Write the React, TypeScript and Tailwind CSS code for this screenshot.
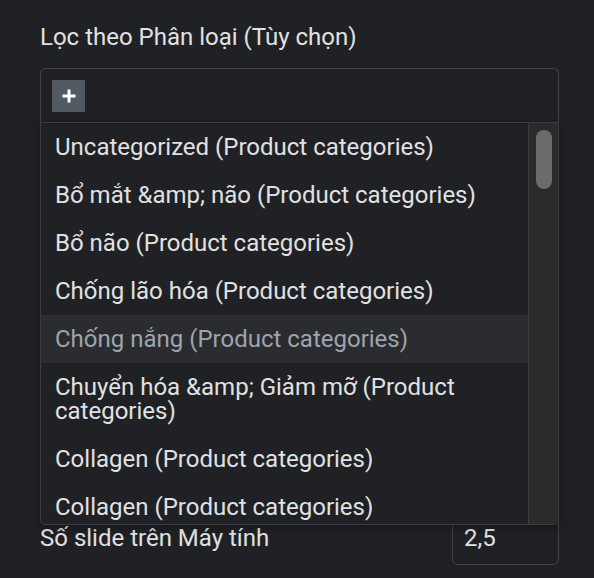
import React from "react";

const items: { label: string; highlight?: boolean }[] = [
  { label: "Uncategorized (Product categories)" },
  { label: "Bổ mắt &amp; não (Product categories)" },
  { label: "Bổ não (Product categories)" },
  { label: "Chống lão hóa (Product categories)" },
  { label: "Chống nắng (Product categories)", highlight: true },
  { label: "Chuyển hóa &amp; Giảm mỡ (Product categories)" },
  { label: "Collagen (Product categories)" },
  { label: "Collagen (Product categories)" },
  { label: "Collagen (Product categories)" },
];

export default function App() {
  return (
    <div
      className="w-[594px] h-[578px] overflow-hidden bg-[#1f2124] pl-[40px] pr-[35px] pt-[22px] text-[#e0e1e3]"
      style={{ fontFamily: "Roboto, 'Noto Sans', sans-serif" }}
    >
      <div className="text-[24px] leading-[30px]">Lọc theo Phân loại (Tùy chọn)</div>
      <div className="relative mt-[16px]">
        <div className="h-[54px] rounded-t-[6px] border border-b-0 border-[#3f444b] pl-[11px] pt-[11px]">
          <div className="flex h-[32px] w-[33px] items-center justify-center bg-[#515962]">
            <svg width="16" height="16" viewBox="0 0 16 16">
              <path d="M8 1.5v13M1.5 8h13" stroke="#ffffff" strokeWidth="3" />
            </svg>
          </div>
        </div>
        <div className="absolute left-0 right-0 top-full z-10 flex h-[403px] overflow-hidden rounded-b-[5px] border border-[#3a3d42] bg-[#1f2124] shadow-[0_2px_8px_rgba(0,0,0,0.35)]">
          <div className="flex-1 overflow-hidden">
            {items.map((it, i) => (
              <div
                key={i}
                className={
                  it.highlight
                    ? "bg-[#2a2c30] px-[14px] py-[12px] text-[24px] leading-[24px] text-[#9da5ae]"
                    : "px-[14px] py-[12px] text-[24px] leading-[24px] text-[#e0e1e3]"
                }
              >
                {it.label}
              </div>
            ))}
          </div>
          <div className="w-[30px] shrink-0 border-l border-[#3c3c3c] bg-[#2b2b2b] pl-[7px] pt-[7px]">
            <div className="h-[59px] w-[16px] rounded-full bg-[#6b6b6b]" />
          </div>
        </div>
      </div>
      <div className="mt-[388px] flex items-center justify-between">
        <div className="text-[24px] leading-[30px]">Số slide trên Máy tính</div>
        <div className="flex h-[55px] w-[107px] items-center rounded-[6px] border border-[#3f444b] px-[11px] text-[24px]">
          2,5
        </div>
      </div>
    </div>
  );
}
